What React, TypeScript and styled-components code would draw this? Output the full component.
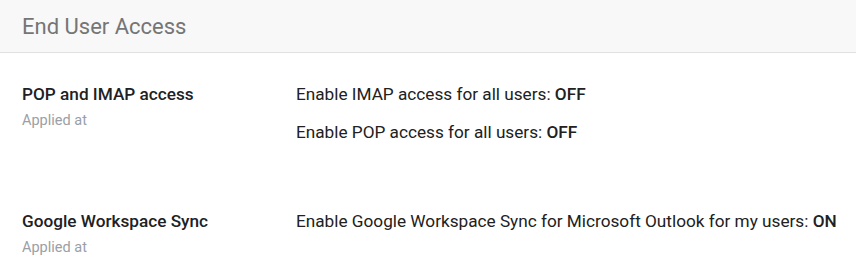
import styled, { createGlobalStyle } from 'styled-components'

const GlobalStyle = createGlobalStyle`
  body {
    margin: 0;
    background: #fff;
    font-family: Roboto, "Liberation Sans", Arial, sans-serif;
  }
`

const Page = styled.div`
  width: 856px;
`

const Header = styled.header`
  height: 53px;
  box-sizing: border-box;
  background: #f8f8f8;
  border-bottom: 1px solid #e0e0e0;
  display: flex;
  align-items: center;
  padding: 0 22px;
`

const Title = styled.h1`
  margin: 0;
  font-size: 22px;
  font-weight: 400;
  color: #757575;
`

const Section = styled.section<{ $top: number }>`
  display: grid;
  grid-template-columns: 274px 1fr;
  align-items: start;
  padding: 0 0 0 22px;
  margin-top: ${(p) => p.$top}px;
`

const Name = styled.div`
  font-size: 17.2px;
  font-weight: 500;
  color: #202124;
  line-height: 22px;
`

const Applied = styled.div`
  font-size: 14.5px;
  color: #9aa0a6;
  line-height: 18px;
  margin-top: 7px;
`

const Settings = styled.div`
  display: flex;
  flex-direction: column;
  gap: 15.5px;
`

const Setting = styled.div`
  font-size: 17.2px;
  color: #212121;
  line-height: 22px;
  white-space: nowrap;

  b {
    font-weight: 500;
  }
`

const sections = [
  {
    name: 'POP and IMAP access',
    top: 30,
    settings: [
      ['Enable IMAP access for all users:', 'OFF'],
      ['Enable POP access for all users:', 'OFF'],
    ],
  },
  {
    name: 'Google Workspace Sync',
    top: 67.5,
    settings: [['Enable Google Workspace Sync for Microsoft Outlook for my users:', 'ON']],
  },
]

const App = () => (
  <Page>
    <GlobalStyle />
    <Header>
      <Title>End User Access</Title>
    </Header>
    {sections.map((s) => (
      <Section key={s.name} $top={s.top}>
        <div>
          <Name>{s.name}</Name>
          <Applied>Applied at</Applied>
        </div>
        <Settings>
          {s.settings.map(([label, value]) => (
            <Setting key={label}>
              {label} <b>{value}</b>
            </Setting>
          ))}
        </Settings>
      </Section>
    ))}
  </Page>
)

export default App
